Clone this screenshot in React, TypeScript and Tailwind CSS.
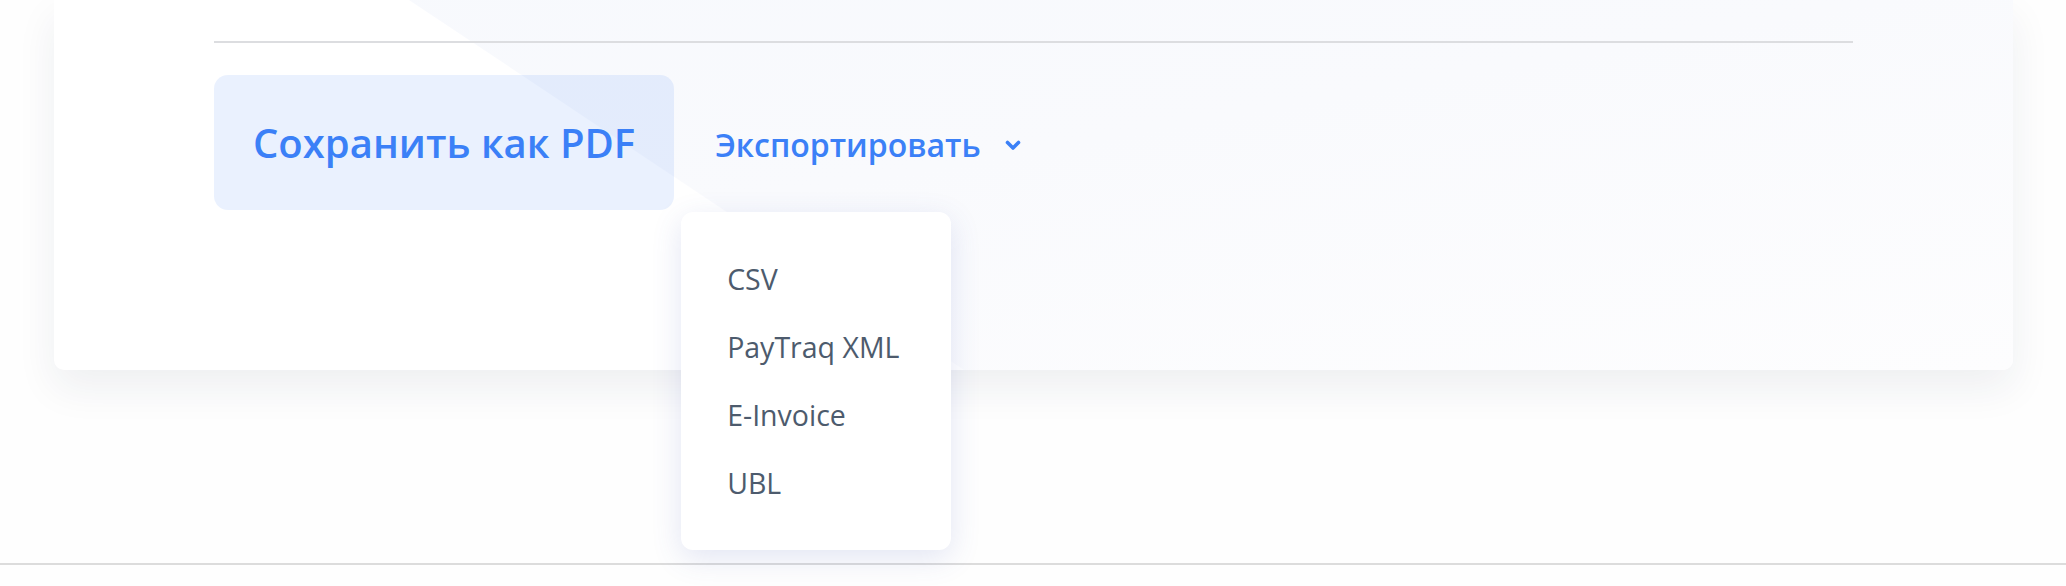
import React from "react";

const items = ["CSV", "PayTraq XML", "E-Invoice", "UBL"];

export default function App() {
  return (
    <div
      className="relative min-h-[586px] w-full bg-[#fefefe]"
      style={{ fontFamily: '"Open Sans", "Noto Sans", sans-serif' }}
    >
      <div className="pl-[54px] pr-[53px]">
        <div className="relative h-[370px] rounded-b-[10px] bg-white shadow-[0_18px_40px_rgba(30,40,70,0.07)]">
          <div className="pointer-events-none absolute inset-0 overflow-hidden rounded-b-[10px]">
            <div className="absolute inset-0 bg-[linear-gradient(170deg,#f7f9fd_0%,#f9fafd_45%,#fdfdfe_100%)] [clip-path:polygon(355px_0,100%_0,100%_100%,910px_100%)]" />
          </div>
          <div className="relative px-40 pt-[41px]">
            <div className="h-[2px] bg-[#dcdde0]" />
            <div className="mt-[32px] flex items-start">
              <button className="flex h-[135px] items-center rounded-[14px] bg-[rgba(61,127,245,0.11)] px-[39px] text-[40px] font-semibold text-[#3b80f7]">
                Сохранить как PDF
              </button>
              <div className="relative ml-[7px]">
                <button className="flex h-[135px] items-center pl-[34px] pt-[4px] text-[32px] font-semibold text-[#3b80f7]">
                  <span>Экспортировать</span>
                  <svg
                    className="ml-[24px] mt-[2px]"
                    width="16"
                    height="11"
                    viewBox="0 0 16 11"
                    fill="none"
                  >
                    <path
                      d="M2.5 2.5 L8 8 L13.5 2.5"
                      stroke="#3b80f7"
                      strokeWidth="3.6"
                      strokeLinecap="round"
                      strokeLinejoin="round"
                    />
                  </svg>
                </button>
                <div className="absolute left-0 top-[137px] z-10 w-[270px] rounded-[12px] bg-white py-[33px] shadow-[0_8px_30px_rgba(70,90,180,0.15)]">
                  {items.map((it) => (
                    <div
                      key={it}
                      className="flex h-[68px] items-center pl-[46px] text-[28.5px] text-[#4d5b6d]"
                    >
                      {it}
                    </div>
                  ))}
                </div>
              </div>
            </div>
          </div>
        </div>
      </div>
      <div className="mt-[193px] h-[2px] bg-[#dcdcdc]" />
    </div>
  );
}
